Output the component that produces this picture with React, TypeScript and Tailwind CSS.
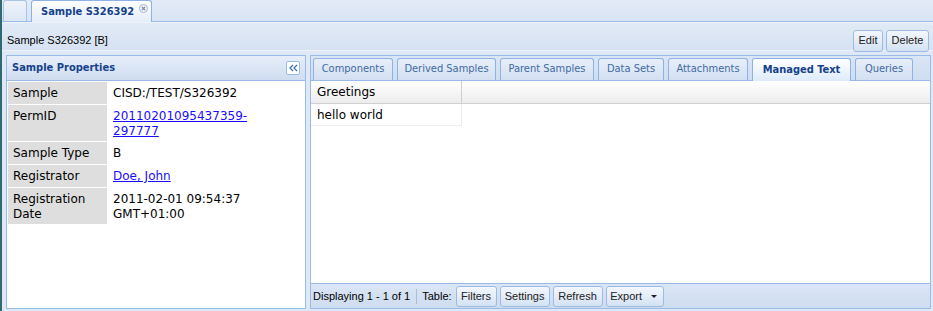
import React from "react"

const tahoma = "font-['DejaVu_Sans_Condensed','DejaVu_Sans',sans-serif]"
const verdana = "font-['DejaVu_Sans',sans-serif]"
const arial = "font-['Liberation_Sans',Arial,sans-serif]"

const tabs = [
  { label: "Components", w: "w-[80px]" },
  { label: "Derived Samples", w: "w-[99px]" },
  { label: "Parent Samples", w: "w-[94px]" },
  { label: "Data Sets", w: "w-[66px]" },
  { label: "Attachments", w: "w-[80px]" },
  { label: "Managed Text", w: "w-[99px]", active: true },
  { label: "Queries", w: "w-[58px]" },
]

function ToolButton({ children, className = "" }: { children: React.ReactNode; className?: string }) {
  return (
    <button
      className={`h-[21px] rounded-[3px] border border-[#9dbbe2] bg-gradient-to-b from-[#f3f7fd] to-[#d4e2f3] text-[11px] text-[#222] ${arial} flex items-center justify-center ${className}`}
    >
      {children}
    </button>
  )
}

function CloseIcon() {
  return (
    <svg width="9" height="9" viewBox="0 0 9 9">
      <circle cx="4.5" cy="4.5" r="4" fill="#eef2f8" stroke="#a9b8cc" />
      <path d="M3 3 L6 6 M6 3 L3 6" stroke="#7f8fa6" strokeWidth="1.2" />
    </svg>
  )
}

export default function App() {
  const props = [
    { label: "Sample", value: "CISD:/TEST/S326392" },
    { label: "PermID", value: "20110201095437359-297777", link: true },
    { label: "Sample Type", value: "B" },
    { label: "Registrator", value: "Doe, John", link: true },
    { label: "Registration Date", value: "2011-02-01 09:54:37 GMT+01:00" },
  ]

  return (
    <div className="w-[933px] h-[311px] flex flex-col bg-[#dfe8f6] border-l-2 border-[#2f6a70] overflow-hidden">
      {/* top tab strip */}
      <div className="h-[22px] flex items-end gap-[4px] pl-[1px] border-b border-[#99bbe8] bg-gradient-to-b from-[#e3ebf7] to-[#d8e4f4]">
        <div className="w-[24px] h-[21px] rounded-t-[3px] border border-b-0 border-[#a8c3e6] bg-gradient-to-b from-[#eef3fb] to-[#dde7f5]" />
        <div className="w-[121px] h-[22px] -mb-[1px] rounded-t-[3px] border border-b-0 border-[#8db2e3] bg-gradient-to-b from-[#ffffff] to-[#e4edf9] flex items-start justify-between pl-[9px] pr-[3px]">
          <span className={`mt-[3px] whitespace-nowrap text-[11px] font-bold text-[#15428b] ${tahoma}`}>Sample S326392</span>
          <span className="mt-[3px]">
            <CloseIcon />
          </span>
        </div>
      </div>

      {/* header bar */}
      <div className="h-[29px] flex items-center justify-between pl-[5px] pr-[4px] bg-gradient-to-b from-[#e1eaf6] to-[#d6e2f2] border-t border-[#eef3fb] border-b border-[#c2d4ec]">
        <span className={`text-[11px] text-black ${arial} mt-[7px]`}>Sample S326392 [B]</span>
        <div className="flex gap-[3px] mt-[8px]">
          <ToolButton className="h-[22px] w-[30px]">Edit</ToolButton>
          <ToolButton className="h-[22px] w-[43px]">Delete</ToolButton>
        </div>
      </div>

      {/* main */}
      <div className="flex-1 flex gap-[4px] pl-[4px] pr-[2px] pt-[4px] pb-[2px]">
        {/* left panel */}
        <div className="w-[300px] flex flex-col border border-[#99bbe8] bg-white">
          <div className="h-[25px] flex items-center justify-between pl-[5px] pr-[5px] border-b border-[#99bbe8] bg-gradient-to-b from-[#e7eef9] to-[#cfddf0]">
            <span className={`text-[11px] font-bold text-[#15428b] ${tahoma}`}>Sample Properties</span>
            <div className="w-[14px] h-[14px] rounded-[2px] border border-[#99bbe8] bg-white flex items-center justify-center">
              <svg width="9" height="8" viewBox="0 0 9 8">
                <path d="M4 1 L1 4 L4 7 M8 1 L5 4 L8 7" fill="none" stroke="#3b6fb6" strokeWidth="1.3" />
              </svg>
            </div>
          </div>
          <div className={`flex-1 flex flex-col gap-[1px] pl-[1px] pt-[1px] text-[12px] leading-[15px] text-black ${verdana}`}>
            {props.map((p) => (
              <div key={p.label} className="flex gap-[2px] min-h-[22px]">
                <div className="w-[99px] shrink-0 bg-[#dedede] px-[5px] pt-[4px] pb-[2px]">{p.label}</div>
                <div className="w-[180px] pl-[4px] pt-[4px] pb-[2px]">
                  {p.link ? <a className="text-[#1a0dff] underline" href="#">{p.value}</a> : p.value}
                </div>
              </div>
            ))}
          </div>
        </div>

        {/* right panel */}
        <div className="flex-1 flex flex-col border border-[#99bbe8] bg-[#d6e3f3]">
          <div className="h-[25px] flex items-end gap-[4px] pl-[2px] border-b border-[#99bbe8] bg-gradient-to-b from-[#dbe6f5] to-[#cfddf1]">
            {tabs.map((t) => (
              <div
                key={t.label}
                className={`${t.w} h-[22px] rounded-t-[3px] border border-b-0 border-[#8db2e3] flex items-center justify-center text-[11px] ${tahoma} ${
                  t.active
                    ? "h-[23px] -mb-[1px] bg-gradient-to-b from-white to-[#deebfb] font-bold text-[#15428b]"
                    : "bg-gradient-to-b from-[#e7eef9] to-[#d3e0f2] text-[#416aa3]"
                }`}
              >
                {t.label}
              </div>
            ))}
          </div>
          <div className="flex-1 flex flex-col bg-white">
            <div className="h-[23px] flex border-b border-[#d0d0d0] bg-gradient-to-b from-white to-[#ededed]">
              <div className={`w-[151px] border-r border-[#d0d0d0] pl-[6px] flex items-center text-[12px] text-black ${verdana}`}>
                Greetings
              </div>
            </div>
            <div className="h-[22px] flex">
              <div className={`w-[151px] border-r border-b border-[#ededed] pl-[6px] flex items-center text-[12px] text-black ${verdana}`}>
                hello world
              </div>
            </div>
            <div className="flex-1" />
            <div className={`h-[25px] flex items-center gap-[3px] pl-[2px] border-t border-[#99bbe8] bg-gradient-to-b from-[#dbe6f5] to-[#cddcef] text-[11px] text-black ${arial}`}>
              <span className="pr-[3px]">Displaying 1 - 1 of 1</span>
              <span className="w-[1px] h-[15px] bg-[#a9bfd6]" />
              <span className="pl-[2px] pr-[1px]">Table:</span>
              <ToolButton className="w-[41px]">Filters</ToolButton>
              <ToolButton className="w-[50px]">Settings</ToolButton>
              <ToolButton className="w-[50px]">Refresh</ToolButton>
              <ToolButton className="w-[58px] gap-[9px] pr-[2px]">
                Export
                <svg width="6" height="3" viewBox="0 0 6 3">
                  <path d="M0 0 H6 L3 3 Z" fill="#222" />
                </svg>
              </ToolButton>
            </div>
          </div>
        </div>
      </div>
    </div>
  )
}
